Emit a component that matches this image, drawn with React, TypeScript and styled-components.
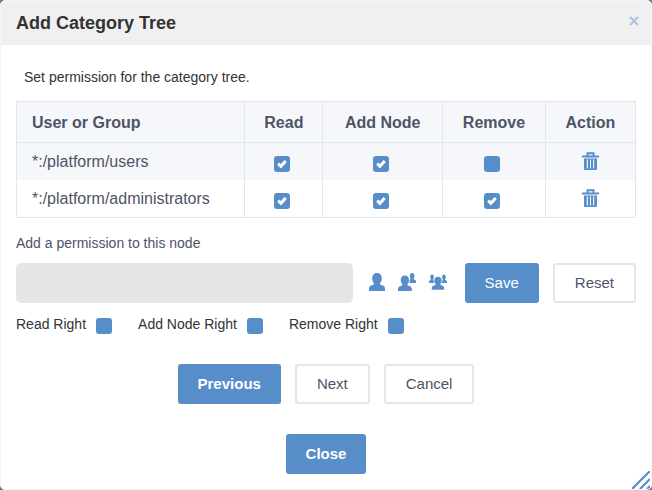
import React from "react";
import styled, { createGlobalStyle, css } from "styled-components";

const blue = "#578dc9";
const line = "#e1e8ec";
const slate = "#4d5466";

const GlobalStyle = createGlobalStyle`
  * { box-sizing: border-box; }
  html, body, #root { height: 100%; }
  body {
    margin: 0;
    background: #777;
    color: #333;
    font-family: "Liberation Sans", Arial, Helvetica, sans-serif;
    font-size: 14px;
    line-height: 20px;
  }
`;

const Dialog = styled.section`
  position: relative;
  min-height: 100%;
  border: 1px solid #f4f5f6;
  border-radius: 5px;
  background: #fff;
  overflow: hidden;
`;

const Header = styled.header`
  display: flex;
  justify-content: space-between;
  align-items: flex-start;
  height: 44px;
  padding: 12px 11px 0 15px;
  background: #f0f0f0;
`;

const Title = styled.h1`
  margin: 0;
  font-size: 18px;
  line-height: 20px;
`;

const Dismiss = styled.button`
  display: flex;
  padding: 3px 1px;
  border: 0;
  background: none;
  cursor: pointer;
`;

const Content = styled.div`
  padding: 22px 15px 15px;
`;

const Intro = styled.p`
  margin: 0 8px 14px;
`;

const Table = styled.table`
  width: 100%;
  table-layout: fixed;
  border-collapse: separate;
  border-spacing: 0;
  border: 1px solid ${line};
  color: ${slate};
  font-size: 16px;
`;

const Col = styled.col<{ $share: number }>`
  width: ${(p) => p.$share}%;
`;

const Th = styled.th<{ $start?: boolean }>`
  height: 41px;
  padding: 2px 15px 0;
  background: #f5f7fa;
  border-bottom: 1px solid ${line};
  text-align: ${(p) => (p.$start ? "left" : "center")};
  & + & { border-left: 1px solid ${line}; }
`;

const Td = styled.td<{ $start?: boolean }>`
  height: 37px;
  padding: 0 15px;
  vertical-align: middle;
  text-align: ${(p) => (p.$start ? "left" : "center")};
  & + & { border-left: 1px solid ${line}; }
`;

const Tr = styled.tr`
  &:nth-child(odd) { background: #f5f7fa; }
`;

const tick = encodeURIComponent(
  '<svg xmlns="http://www.w3.org/2000/svg" viewBox="0 0 16 16"><path d="M4.200 7.700 6.900 10.300 11.700 5" fill="none" stroke="#fff" stroke-width="3"/></svg>'
);

const Checkbox = styled.input.attrs({ type: "checkbox" })`
  appearance: none;
  display: block;
  flex: none;
  width: 16px;
  height: 16px;
  margin: 0;
  border-radius: 3px;
  background: ${blue};
  &:checked { background: ${blue} url("data:image/svg+xml,${tick}"); }
`;

const CellCheck = styled.label`
  display: flex;
  justify-content: center;
  padding: 5px 4px 0 0;
`;

const IconButton = styled.button`
  display: inline-flex;
  align-items: center;
  justify-content: center;
  padding: 0;
  border: 0;
  background: none;
  color: ${blue};
  vertical-align: middle;
  cursor: pointer;
`;

const DeleteButton = styled(IconButton)`
  padding-bottom: 2px;
`;

const FieldLabel = styled.label`
  display: block;
  margin: 15px 0 10px;
  color: ${slate};
`;

const FormRow = styled.div`
  display: flex;
  align-items: center;
  gap: 14px;
`;

const MemberInput = styled.input`
  flex: 1;
  min-width: 0;
  height: 40px;
  padding: 0 10px;
  border: 2px solid ${line};
  border-radius: 5px;
  background: #e5e5e5;
`;

const Pickers = styled.div`
  display: flex;
  gap: 13px;
  padding: 0 4px 3px 2px;
`;

const Button = styled.button<{ $primary?: boolean; $strong?: boolean }>`
  height: 40px;
  padding: 0 20px;
  border: 2px solid ${line};
  border-radius: 3px;
  background: #fff;
  color: ${slate};
  font-family: inherit;
  font-size: 15px;
  line-height: 20px;
  font-weight: ${(p) => (p.$strong ? 700 : 400)};
  cursor: pointer;
  ${(p) =>
    p.$primary &&
    css`
      padding: 0 20px;
      border: 0;
      background: ${blue};
      color: #fff;
    `}
`;

const Rights = styled.div`
  display: flex;
  gap: 26px;
  margin-top: 11px;
`;

const Right = styled.label`
  display: flex;
  gap: 10px;
  ${Checkbox} { margin-top: 4px; }
`;

const Actions = styled.div`
  display: flex;
  justify-content: center;
  gap: 14px;
  margin-top: 30px;
`;

const Grip = styled.svg`
  position: absolute;
  right: 1px;
  bottom: 0;
  color: ${blue};
`;

const Trash = () => (
  <svg width="17" height="18" viewBox="0 0 17 18" fill="none" stroke="currentColor">
    <path d="M0 4.500h17" strokeWidth="2" />
    <path d="M5.500 4V1.200h6V4" strokeWidth="2" />
    <path
      d="M2 6.500h13V17a1 1 0 0 1-1 1H3a1 1 0 0 1-1-1ZM4.800 7.500v9h1.100v-9ZM8 7.500v9h1v-9ZM11.100 7.500v9h1.100v-9Z"
      fill="currentColor"
      fillRule="evenodd"
      stroke="none"
    />
  </svg>
);

const person =
  "M8 0C5 0 3.200 2 3.200 5.300c0 2.200.8 4 1.900 5.100 0 .9-.8 1.300-2.300 1.800C.8 12.900 0 13.800 0 16v2h16v-2c0-2.200-.8-3.100-2.800-3.800-1.500-.5-2.300-.9-2.300-1.800 1.100-1.100 1.900-2.900 1.900-5.100C12.800 2 11 0 8 0Z";

const User = () => (
  <svg width="16" height="18" viewBox="0 0 16 18" fill="currentColor">
    <path d={person} />
  </svg>
);

const Member = () => (
  <svg width="18" height="18" viewBox="0 0 18 18" fill="currentColor">
    <path d={person} transform="translate(10.300 0) scale(.480 .560)" />
    <path d={person} transform="translate(0 2.500) scale(.860 .860)" stroke="#fff" strokeWidth="2" paintOrder="stroke" />
  </svg>
);

const Group = () => (
  <svg width="18" height="18" viewBox="0 0 18 18" fill="currentColor">
    <path d={person} transform="translate(0 1.500) scale(.380 .470)" />
    <path d={person} transform="translate(11.900 1.500) scale(.380 .470)" />
    <path d={person} transform="translate(2.800 3.800) scale(.770 .720)" stroke="#fff" strokeWidth="2" paintOrder="stroke" />
  </svg>
);

const columns = [
  { name: "Read", share: 12.6 },
  { name: "Add Node", share: 19.4 },
  { name: "Remove", share: 16.6 },
];

const permissions = [
  { member: "*:/platform/users", granted: [true, true, false] },
  { member: "*:/platform/administrators", granted: [true, true, true] },
];

export default function App() {
  return (
    <>
      <GlobalStyle />
      <Dialog role="dialog" aria-labelledby="title">
        <Header>
          <Title id="title">Add Category Tree</Title>
          <Dismiss aria-label="Close dialog">
            <svg width="10" height="10" viewBox="0 0 10 10">
              <path d="M1 1l8 8M9 1L1 9" stroke="#a9c2df" strokeWidth="2" />
            </svg>
          </Dismiss>
        </Header>
        <Content>
          <Intro>Set permission for the category tree.</Intro>
          <Table>
            <colgroup>
              <Col $share={36.8} />
              {columns.map((c) => (
                <Col key={c.name} $share={c.share} />
              ))}
              <Col $share={14.6} />
            </colgroup>
            <thead>
              <tr>
                <Th $start>User or Group</Th>
                {columns.map((c) => (
                  <Th key={c.name}>{c.name}</Th>
                ))}
                <Th>Action</Th>
              </tr>
            </thead>
            <tbody>
              {permissions.map((p) => (
                <Tr key={p.member}>
                  <Td $start>{p.member}</Td>
                  {p.granted.map((on, i) => (
                    <Td key={columns[i].name}>
                      <CellCheck>
                        <Checkbox defaultChecked={on} aria-label={`${columns[i].name} ${p.member}`} />
                      </CellCheck>
                    </Td>
                  ))}
                  <Td>
                    <DeleteButton aria-label={`Delete ${p.member}`}>
                      <Trash />
                    </DeleteButton>
                  </Td>
                </Tr>
              ))}
            </tbody>
          </Table>
          <FieldLabel htmlFor="member">Add a permission to this node</FieldLabel>
          <FormRow>
            <MemberInput id="member" readOnly />
            <Pickers>
              <IconButton aria-label="Select user"><User /></IconButton>
              <IconButton aria-label="Select membership"><Member /></IconButton>
              <IconButton aria-label="Select group"><Group /></IconButton>
            </Pickers>
            <Button $primary>Save</Button>
            <Button>Reset</Button>
          </FormRow>
          <Rights>
            {["Read Right", "Add Node Right", "Remove Right"].map((r) => (
              <Right key={r}>
                {r}
                <Checkbox />
              </Right>
            ))}
          </Rights>
          <Actions>
            <Button $primary $strong>Previous</Button>
            <Button>Next</Button>
            <Button>Cancel</Button>
          </Actions>
          <Actions>
            <Button $primary $strong>Close</Button>
          </Actions>
        </Content>
        <Grip width="18" height="18" viewBox="0 0 18 18" stroke="currentColor" strokeWidth="2.2" aria-hidden="true">
          <path d="M0 18L18 0M8 18L18 8M15 18l3-3" />
        </Grip>
      </Dialog>
    </>
  );
}
